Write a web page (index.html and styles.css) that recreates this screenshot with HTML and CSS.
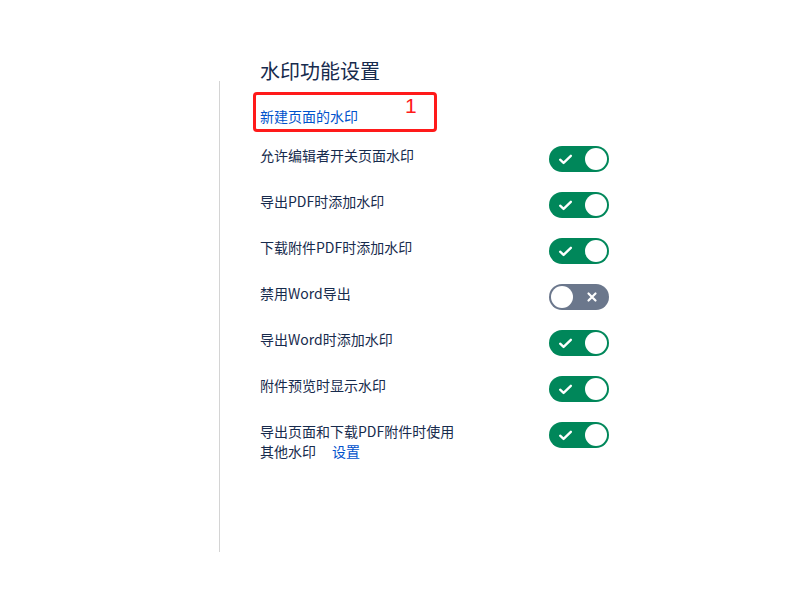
FILE: index.html
```html
<!DOCTYPE html>
<html lang="zh-CN">
<head>
<meta charset="utf-8">
<title>水印功能设置</title>
<link rel="stylesheet" href="styles.css">
</head>
<body>
<div class="page">
  <section class="panel">
    <h2 class="title">水印功能设置</h2>
    <div class="new-box">
      <a class="link" href="#">新建页面的水印</a>
      <span class="badge">1</span>
    </div>
    <ul class="rows">
      <li class="row"><span class="label">允许编辑者开关页面水印</span>
        <span class="toggle on"><svg class="ico" viewBox="0 0 14 12"><path d="M2 6.2l3.2 3L12 2.6" fill="none" stroke="#fff" stroke-width="2.2" stroke-linecap="round" stroke-linejoin="round"/></svg><span class="knob"></span></span></li>
      <li class="row"><span class="label">导出PDF时添加水印</span>
        <span class="toggle on"><svg class="ico" viewBox="0 0 14 12"><path d="M2 6.2l3.2 3L12 2.6" fill="none" stroke="#fff" stroke-width="2.2" stroke-linecap="round" stroke-linejoin="round"/></svg><span class="knob"></span></span></li>
      <li class="row"><span class="label">下载附件PDF时添加水印</span>
        <span class="toggle on"><svg class="ico" viewBox="0 0 14 12"><path d="M2 6.2l3.2 3L12 2.6" fill="none" stroke="#fff" stroke-width="2.2" stroke-linecap="round" stroke-linejoin="round"/></svg><span class="knob"></span></span></li>
      <li class="row"><span class="label">禁用Word导出</span>
        <span class="toggle off"><span class="knob"></span><svg class="ico" viewBox="0 0 12 12"><path d="M2.5 2.5l7 7M9.5 2.5l-7 7" fill="none" stroke="#fff" stroke-width="2.2" stroke-linecap="round"/></svg></span></li>
      <li class="row"><span class="label">导出Word时添加水印</span>
        <span class="toggle on"><svg class="ico" viewBox="0 0 14 12"><path d="M2 6.2l3.2 3L12 2.6" fill="none" stroke="#fff" stroke-width="2.2" stroke-linecap="round" stroke-linejoin="round"/></svg><span class="knob"></span></span></li>
      <li class="row"><span class="label">附件预览时显示水印</span>
        <span class="toggle on"><svg class="ico" viewBox="0 0 14 12"><path d="M2 6.2l3.2 3L12 2.6" fill="none" stroke="#fff" stroke-width="2.2" stroke-linecap="round" stroke-linejoin="round"/></svg><span class="knob"></span></span></li>
      <li class="row"><span class="label">导出页面和下载PDF附件时使用<br>其他水印<a class="link set" href="#">设置</a></span>
        <span class="toggle on"><svg class="ico" viewBox="0 0 14 12"><path d="M2 6.2l3.2 3L12 2.6" fill="none" stroke="#fff" stroke-width="2.2" stroke-linecap="round" stroke-linejoin="round"/></svg><span class="knob"></span></span></li>
    </ul>
  </section>
</div>
</body>
</html>
```
FILE: styles.css
```css
* { box-sizing: border-box; }
html, body { margin: 0; padding: 0; background: #fff; }
body {
  font-family: "Noto Sans CJK SC", "Noto Sans", "Liberation Sans", sans-serif;
  color: #172b4d;
  font-size: 14px;
}
.page {
  padding: 81px 0 0 219px;
}
.panel {
  display: flow-root;
  border-left: 1px solid #d4d4d4;
  height: 471px;
  padding-left: 40px;
}
.title {
  margin: -22px 0 0 0;
  font-size: 20px;
  line-height: 24px;
  font-weight: 400;
  color: #172b4d;
}
.new-box {
  position: relative;
  margin: 9px 0 0 -7px;
  width: 184px;
  height: 40px;
  border: 3px solid #ff1a1a;
  border-radius: 4px;
  padding: 11px 0 0 4px;
  line-height: 20px;
}
.link {
  color: #0052cc;
  text-decoration: none;
}
.badge {
  position: absolute;
  left: 149px;
  top: -1px;
  color: #ff1a1a;
  font-family: "Liberation Sans", Arial, sans-serif;
  font-size: 21px;
  line-height: 24px;
}
.rows {
  list-style: none;
  margin: 13px 0 0 0;
  padding: 0;
  width: 349px;
}
.row {
  display: flex;
  justify-content: space-between;
  align-items: flex-start;
  min-height: 46px;
  line-height: 20px;
}
.set { margin-left: 16px; }
.toggle {
  margin-top: 1px;
  width: 60px;
  height: 26px;
  border-radius: 13px;
  display: flex;
  align-items: center;
  justify-content: space-between;
  padding: 0 2px;
  flex: none;
}
.toggle.on { background: #00875a; padding-left: 9px; }
.toggle.off { background: #6b778c; padding-right: 11px; }
.knob {
  width: 22px;
  height: 22px;
  border-radius: 50%;
  background: #fff;
}
.toggle.on .ico { width: 15px; height: 13px; }
.toggle.off .ico { width: 12px; height: 12px; }
```
